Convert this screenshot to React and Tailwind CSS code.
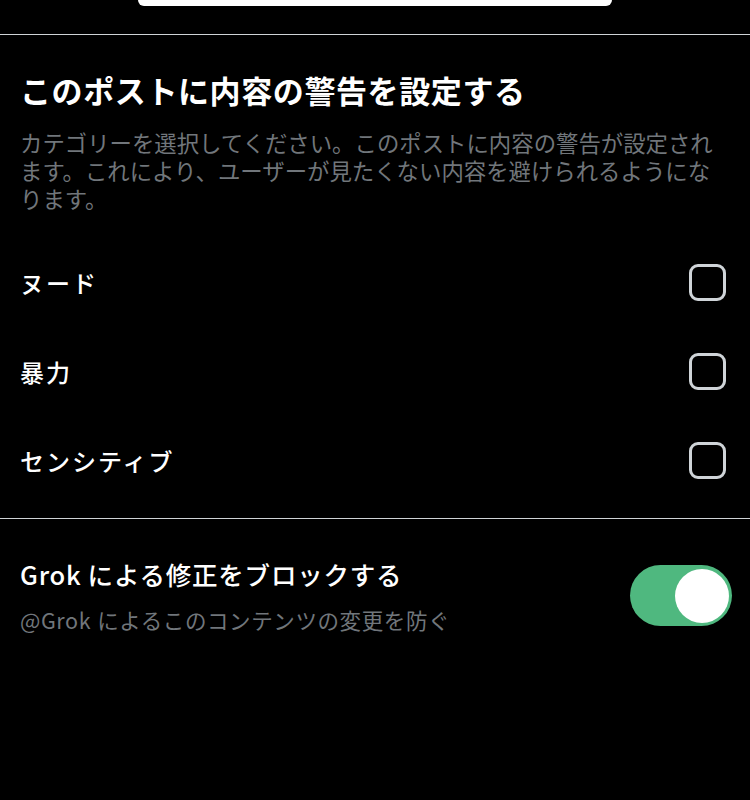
import { useState } from "react";

const font = { fontFamily: '"Noto Sans CJK JP", "Noto Sans", sans-serif' };

const categories = ["ヌード", "暴力", "センシティブ"];

export default function App() {
  const [checked, setChecked] = useState({});
  const [blockGrok, setBlockGrok] = useState(true);

  return (
    <div className="w-[750px] h-[800px] bg-black text-white overflow-hidden" style={font}>
      {/* bottom of the button above */}
      <div className="h-[34px] flex justify-center items-start">
        <div className="w-[474px] h-[6px] bg-white rounded-b-[20px]" />
      </div>
      <div className="h-px bg-[#cfd3d6]" />

      {/* Content warning */}
      <div className="px-5 pt-[35px]">
        <h2 className="text-[31px] leading-[40px] font-bold tracking-[0.6px]">
          このポストに内容の警告を設定する
        </h2>
        <p className="mt-[18px] text-[22.4px] leading-[28px] text-[#71767b]">
          カテゴリーを選択してください。このポストに内容の警告が設定されます。これにより、ユーザーが見たくない内容を避けられるようになります。
        </p>
      </div>

      <div className="mt-[26px] pb-[13px]">
        {categories.map((c) => (
          <button
            key={c}
            onClick={() => setChecked({ ...checked, [c]: !checked[c] })}
            className="w-full h-[89px] flex items-center justify-between pl-5 pr-6 text-left"
          >
            <span className="text-[24px] font-medium tracking-[2px]">{c}</span>
            <span
              className={`w-[37px] h-[37px] rounded-[9px] border-[3px] ${
                checked[c] ? "border-[#1d9bf0] bg-[#1d9bf0]" : "border-[#cfd4d8]"
              }`}
            />
          </button>
        ))}
      </div>
      <div className="h-px bg-[#cfd3d6]" />

      {/* Grok */}
      <div className="flex items-center justify-between pl-5 pr-[18px] pt-[37px]">
        <div>
          <div className="text-[25.5px] leading-[36px] font-medium tracking-[0.8px]">
            Grok<span className="ml-[6px]">による修正をブロックする</span>
          </div>
          <div className="mt-[13px] text-[21.5px] leading-[30px] text-[#71767b] tracking-[0.6px]">
            @Grok<span className="ml-[6px]">によるこのコンテンツの変更を防ぐ</span>
          </div>
        </div>
        <button
          onClick={() => setBlockGrok(!blockGrok)}
          className={`w-[102px] h-[61px] rounded-full p-[3.5px] flex ${
            blockGrok ? "bg-[#4fb87f] justify-end" : "bg-[#3e4144] justify-start"
          }`}
        >
          <span className="w-[54px] h-[54px] rounded-full bg-white" />
        </button>
      </div>
    </div>
  );
}
